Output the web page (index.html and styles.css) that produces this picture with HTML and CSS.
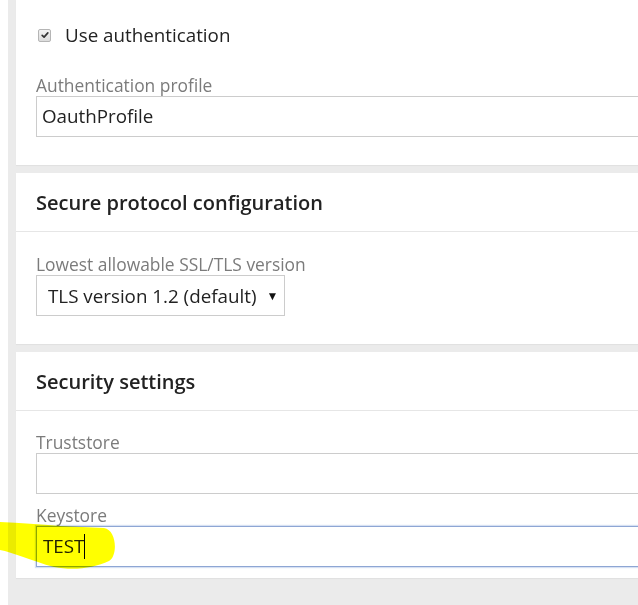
FILE: index.html
```html
<!DOCTYPE html>
<html>
<head>
<meta charset="utf-8">
<link rel="stylesheet" href="styles.css">
</head>
<body>
<div class="page">
  <section class="card card-auth">
    <div class="check-row">
      <span class="checkbox"><svg viewBox="0 0 12 12" width="12" height="12"><path d="M2.6 6.4 L4.9 8.6 L9.4 3.4" fill="none" stroke="#333" stroke-width="2" stroke-linecap="round" stroke-linejoin="round"/></svg></span>
      <span class="check-label">Use authentication</span>
    </div>
    <div class="field">
      <div class="label">Authentication profile</div>
      <div class="input">OauthProfile</div>
    </div>
  </section>

  <section class="card card-protocol">
    <header class="card-head">Secure protocol configuration</header>
    <div class="card-body">
      <div class="label">Lowest allowable SSL/TLS version</div>
      <div class="select"><span>TLS version 1.2 (default)</span><span class="arrow">▼</span></div>
    </div>
  </section>

  <section class="card card-security">
    <header class="card-head">Security settings</header>
    <div class="card-body">
      <div class="field">
        <div class="label">Truststore</div>
        <div class="input"></div>
      </div>
      <div class="field field-key">
        <div class="label">Keystore</div>
        <div class="input input-focus">TEST<span class="caret"></span></div>
      </div>
    </div>
  </section>
  <svg class="highlight" width="125" height="60" viewBox="0 0 125 60"><path d="M0,2 C20,3 40,4 60,6 L104,8 C117,10 118,36 109,41 C94,48 74,51 54,47 C32,41 12,32 0,30 Z" fill="#ffff00"/></svg>
</div>
</body>
</html>
```
FILE: styles.css
```css
html, body {
  margin: 0;
  padding: 0;
  background: #ffffff;
  overflow: hidden;
}
body {
  width: 638px;
  height: 605px;
  font-family: "Open Sans", "Liberation Sans", sans-serif;
  color: #222;
}
.page {
  position: relative;
  margin-left: 8px;
  width: 700px;
  height: 605px;
  background: #ebebeb;
  padding-left: 8px;
  box-sizing: border-box;
}
.card {
  background: #fff;
  margin-bottom: 8px;
  box-shadow: 0 1px 1px rgba(0,0,0,0.04);
}
.card-auth {
  height: 165px;
  padding: 23px 0 0 20px;
  box-sizing: border-box;
}
.check-row {
  display: flex;
  align-items: center;
  height: 24px;
  padding-left: 2px;
}
.checkbox {
  width: 11px;
  height: 11px;
  border: 1px solid #b5b5b5;
  border-radius: 2px;
  background: linear-gradient(#f2f2f2, #dcdcdc);
  display: flex;
  align-items: center;
  justify-content: center;
}
.checkbox svg { width: 10px; height: 10px; }
.check-label {
  margin-left: 14px;
  font-size: 18.8px;
  line-height: 24px;
  color: #222;
}
.card-auth .field { margin-top: 28px; }
.label {
  font-size: 17.4px;
  line-height: 20px;
  color: #7b7b7b;
  margin-bottom: 1px;
}
.input {
  height: 39px;
  border: 1px solid #cccccc;
  box-sizing: content-box;
  font-size: 18.8px;
  line-height: 39px;
  padding-left: 5px;
  color: #222;
}
.card-head {
  font-size: 20px;
  font-weight: 600;
  line-height: 24px;
  padding: 18px 20px 16px;
  border-bottom: 1px solid #e6e6e6;
  color: #222;
}
.card-body {
  padding: 22px 0 0 20px;
}
.card-protocol { height: 171px; }
.select {
  width: 236px;
  height: 39px;
  border: 1px solid #cccccc;
  display: flex;
  align-items: center;
  padding: 0 0 0 11px;
  font-size: 18.8px;
  color: #222;
}
.arrow {
  font-size: 12px;
  margin-left: 10px;
  color: #111;
}
.card-security { height: 226px; margin-bottom: 0; }
.card-security .card-body { padding-top: 21px; }
.field-key { margin-top: 11px; }
.input-focus {
  border-color: #8ea6d4;
  box-shadow: 0 0 1px 1px rgba(140,170,220,0.35);
  padding-left: 6px;
  display: flex;
  align-items: center;
}
.caret {
  display: inline-block;
  width: 1px;
  height: 25px;
  background: #000;
  margin-left: 0;
}
.highlight {
  position: absolute;
  left: -8px;
  top: 520px;
  mix-blend-mode: multiply;
  pointer-events: none;
}
```
